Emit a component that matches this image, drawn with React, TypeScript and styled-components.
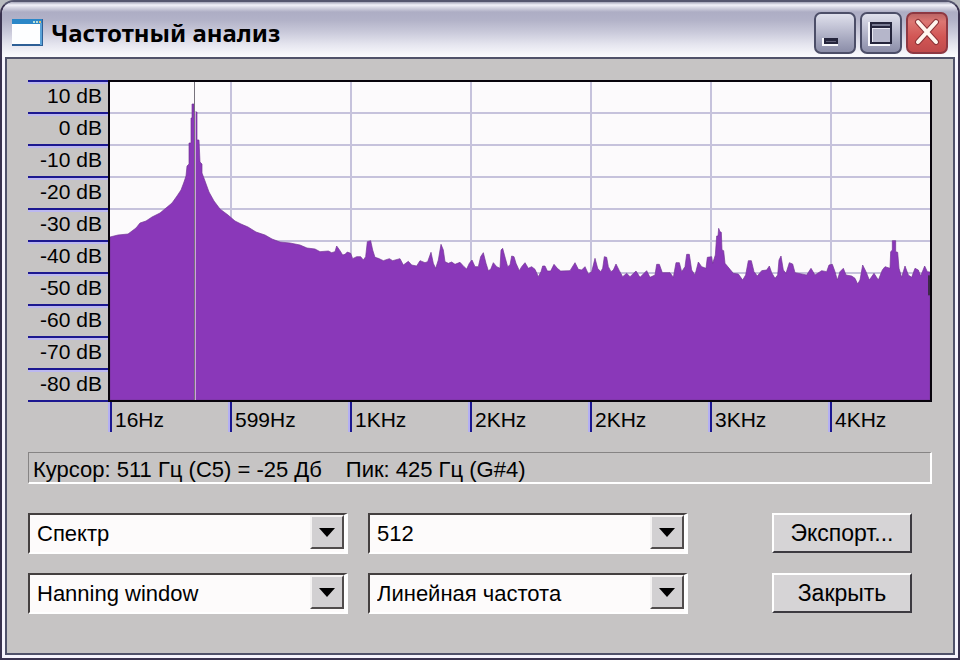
import React from 'react';
import styled, { createGlobalStyle } from 'styled-components';

const GlobalStyle = createGlobalStyle`
  * { box-sizing: border-box; }
  body {
    margin: 0;
    background: #b9bcc0;
    color: #000;
    font-family: "Liberation Sans", Arial, sans-serif;
    font-size: 21px;
    line-height: 24px;
  }
`;

const Window = styled.main`
  display: flex;
  flex-direction: column;
  min-height: 100vh;
  padding: 0 3px 3px;
  border: 2px solid #39324f;
  border-top-color: #55566f;
  border-radius: 14px 14px 0 0;
  background: #f6f4fd;
  overflow: hidden;
`;

const TitleBar = styled.header`
  display: flex;
  align-items: center;
  gap: 8px;
  height: 55px;
  margin: 0 -3px;
  padding: 6px 10px 0 10px;
  background: linear-gradient(
    #a3a4b8 0, #f2f2fa 3px, #d2d2e0 6px, #adadc4 10px, #b2b2c8 18px,
    #c9c9da 30px, #e4e4ee 42px, #f8f8fc 53px, #fafafd 55px
  );
`;

const Title = styled.h1`
  flex: 1;
  margin: 0;
  font-family: "Noto Sans", sans-serif;
  font-size: 24px;
  font-weight: 700;
  line-height: 32px;
`;

const CaptionButtons = styled.div`
  display: flex;
  gap: 4px;
`;

const CaptionButton = styled.button<{ $danger?: boolean }>`
  display: grid;
  place-items: center;
  width: 42px;
  height: 42px;
  padding: 0;
  border: 2px solid ${(p) => (p.$danger ? '#8e3842' : '#4c4e68')};
  border-radius: 7px;
  background: ${(p) =>
    p.$danger
      ? 'linear-gradient(#bb6464 0, #dc7672 20%, #d25654 60%, #c04a4c 100%)'
      : 'linear-gradient(#dfe0ec 0, #c2c3d5 35%, #9fa1b9 75%, #8b8da8 100%)'};
`;

const Panel = styled.section`
  flex: 1;
  padding: 21px 21px 20px;
  border: 2px solid #50526a;
  background: #c6c4c4;
`;

const Chart = styled.div`
  display: grid;
  grid-template-columns: 80px 1fr;
`;

const LevelAxis = styled.ol`
  margin: 0;
  padding: 0;
  list-style: none;
  border-bottom: 2px solid #1c1890;
`;

const Level = styled.li`
  height: 32px;
  padding: 1px 6px 0 0;
  border-top: 2px solid #1c1890;
  box-shadow: inset 0 2px #bcb8f0;
  text-align: right;
  line-height: 26px;
`;

const Plot = styled.div`
  border: 2px solid #08040c;
  background: #fcfafc;
`;

const Spectrum = styled.svg`
  display: block;
  width: 100%;
  height: 318px;
`;

const FrequencyAxis = styled.ol`
  grid-column: 2;
  display: grid;
  grid-template-columns: repeat(6, 120fr) 100fr;
  margin: 0;
  padding: 0 2px;
  list-style: none;
`;

const Frequency = styled.li`
  height: 30px;
  padding: 6px 0 0 3px;
  border-left: 2px solid #1c1890;
  box-shadow: -2px 0 #b4b0f4;
  white-space: nowrap;
`;

const StatusBar = styled.output`
  display: flex;
  gap: 24px;
  height: 32px;
  margin: 20px 0 29px;
  padding: 5px 4px 0;
  border: solid;
  border-width: 1px 2px 2px 1px;
  border-color: #868484 #fff #fff #868484;
  font-size: 22px;
  white-space: pre;
`;

const Controls = styled.form`
  display: grid;
  grid-template-columns: 1fr 1fr 140px;
  column-gap: 20px;
  row-gap: 19px;
  padding-right: 20px;
`;

const ControlPair = styled.div`
  grid-column: span 2;
  display: grid;
  grid-template-columns: 1fr 1fr;
  gap: 20px;
  margin-right: 64px;
`;

const SelectBox = styled.div`
  display: grid;
  grid-template-columns: 1fr 34px;
  height: 41px;
  border: 2px solid;
  border-color: #444040 #fff #fff #444040;
  border-right-width: 4px;
  background: #fdfbfb;
`;

const Select = styled.select`
  grid-area: 1 / 1 / 2 / 3;
  width: 100%;
  padding: 0 40px 0 7px;
  border: 0;
  appearance: none;
  background: transparent;
  color: #000;
  font: 22px/32px "Liberation Sans", Arial, sans-serif;
`;

const DropArrow = styled.span`
  grid-area: 1 / 2;
  display: grid;
  place-items: center;
  height: 34px;
  border: 2px solid;
  border-color: #f4f2f2 #504c4c #504c4c #f4f2f2;
  background: #d2d0d2;
  pointer-events: none;
`;

const PushButton = styled.button`
  height: 40px;
  padding: 0;
  border: 2px solid;
  border-color: #fff #3c3a40 #3c3a40 #fff;
  background: #d6d4d6;
  color: #000;
  font: 23px/32px "Liberation Sans", Arial, sans-serif;
`;

const levels = [10, 0, -10, -20, -30, -40, -50, -60, -70, -80];
const frequencies = ['16Hz', '599Hz', '1KHz', '2KHz', '2KHz', '3KHz', '4KHz'];

type Band = { x: number; y: number; scale: number; points: string };

const bands: Band[] = [
  {
    x: 0, y: 0, scale: 3,
    points:
      '0,155 8,153 18,152 22,149 26,146 30,141 36,139 42,135 50,131 56,126 62,121 67,114 71,108 74,100 76,94 77,84 79,82 79,61 81,61 81,36 82,36 82,22 84,22 84,30 87,30 87,58 89,58 90,80 92,82 92,91 95,99 99,110 104,119 110,127 118,133 125,139 131,142 138,145 146,150 155,153 162,157 170,160 180,161 190,163 197,166 205,167',
  },
  {
    x: 630, y: 354, scale: 1,
    points:
      '0,155 25,153 35,158 45,155 50,138 60,152 68,165 75,163 82,156 92,160 98,176 110,170 122,170 130,180 137,170 142,125 152,122 158,150 165,172 175,175 190,182 208,176 218,182 240,176 250,195 265,184 275,195 290,198 300,182 315,188 323,185 333,157 340,190 347,205 355,180 363,133 370,150 375,185 385,190 395,186 405,193 420,187 432,200 440,207 448,190 456,180 465,200 475,200 482,170 490,158 498,190 505,212 512,208 520,188 530,200 540,205 543,150 548,145 556,175 563,200 570,195 575,168 582,170 588,190 598,212 605,200 615,188 625,205 635,200 645,208 655,230 663,215 668,198 675,198 682,213 692,213 702,193 712,205 722,213 750,212 765,188 775,208 785,210 795,200 805,222 815,215 825,175 833,205 842,215 848,205 853,170 860,172 865,200 873,215 880,210 888,192 898,212 908,230 920,220',
  },
  {
    x: 1560, y: 354, scale: 1,
    points:
      '0,230 18,213 30,232 50,212 60,232 75,225 80,193 88,193 97,218 120,218 130,232 138,188 148,188 155,215 165,200 170,163 178,163 185,210 195,225 205,186 215,200 228,205 232,172 245,170 248,190 256,165 260,108 264,108 266,85 270,95 274,97 276,150 281,152 285,190 300,208 310,220 325,222 338,240 347,225 355,182 364,182 372,215 382,228 395,212 410,210 418,198 425,218 435,235 443,225 447,180 453,168 460,210 468,220 478,188 488,192 495,218 530,225 543,205 555,225 575,212 590,215 597,195 607,193 615,215 622,240 630,215 640,205 648,225 665,228 675,235 683,252 690,240 698,195 708,215 718,240 732,220 745,240 757,210 765,200 780,205 782,155 787,150 787,122 797,122 797,155 803,157 807,205 815,232 825,198 835,225 845,232 855,205 865,210 872,228 884,198 892,215 900,216',
  },
];

const outline = bands
  .flatMap((band) =>
    band.points.split(' ').map((pair) => {
      const [x, y] = pair.split(',').map(Number);
      return `${band.x + x * band.scale},${band.y + y * band.scale}`;
    }),
  )
  .join(' ');

function SpectrumPlot() {
  return (
    <Spectrum viewBox="0 0 2460 954" preserveAspectRatio="none" role="img" aria-label="Спектр">
      <g fill="#c6c2dc">
        {[90, 186, 282, 378, 474, 570].map((y) => (
          <rect key={y} x="0" y={y} width="2460" height="6" />
        ))}
        {[360, 720, 1080, 1440, 1800, 2160].map((x) => (
          <rect key={x} x={x} y="0" width="6" height="954" />
        ))}
      </g>
      <polygon points={`0,954 ${outline} 2460,954`} fill="#8a38b9" stroke="#713493" strokeWidth="2" />
      <rect x="252" y="0" width="3" height="954" fill="#77727c" />
      <rect x="255" y="90" width="3" height="864" fill="#cfa0de" />
      <rect x="2454" y="580" width="6" height="60" fill="#3d2a48" />
    </Spectrum>
  );
}

function AppIcon() {
  return (
    <svg width="31" height="27" viewBox="0 0 31 27" aria-hidden="true">
      <path d="M0 0h31v27H0z" fill="#2d5f96" />
      <path d="M0 0h30v5H0z" fill="#2b87c8" />
      <path d="M0 5h28v20H0z" fill="#fdfeff" />
      <path d="M28 4h2v22h-2z" fill="#5aa3d8" />
      <path d="M21 2h2v2h-2zM24 2h2v2h-2z" fill="#b9e0d8" />
      <path d="M27 2h2v2h-2z" fill="#e0bc72" />
    </svg>
  );
}

function MinimizeIcon() {
  return (
    <svg width="38" height="38" viewBox="0 0 38 38" aria-hidden="true">
      <path d="M6 24h16v8H6z" fill="#f8f8fc" />
      <path d="M8 24h14v6H8z" fill="#25253c" />
      <path d="M10 27h10v1H10z" fill="#606078" />
    </svg>
  );
}

function MaximizeIcon() {
  return (
    <svg width="38" height="38" viewBox="0 0 38 38" aria-hidden="true">
      <path d="M6 8h22v24H6z" fill="#f8f8fc" />
      <path d="M8 8h22v22H8z" fill="#25253c" />
      <path d="M10 10h18v2H10z" fill="#777990" />
      <path d="M10 14h18v14H10z" fill="#b5b6ca" />
      <path d="M10 14h18v1H10zM10 14h1v14h-1z" fill="#e8e8f2" />
    </svg>
  );
}

function CloseIcon() {
  return (
    <svg width="38" height="38" viewBox="0 0 38 38" aria-hidden="true">
      <path d="M10 8L28 28M28 8L10 28" stroke="#8c3438" strokeWidth="6" strokeLinecap="round" />
      <path d="M10 8L28 28M28 8L10 28" stroke="#fff6ee" strokeWidth="4" strokeLinecap="round" />
    </svg>
  );
}

function ComboBox({ label, value }: { label: string; value: string }) {
  return (
    <SelectBox>
      <Select aria-label={label} defaultValue={value}>
        <option>{value}</option>
      </Select>
      <DropArrow>
        <svg width="16" height="9" viewBox="0 0 16 9" aria-hidden="true">
          <path d="M0 0h16L8 9z" fill="#000" />
        </svg>
      </DropArrow>
    </SelectBox>
  );
}

export default function App() {
  return (
    <>
      <GlobalStyle />
      <Window>
        <TitleBar>
          <AppIcon />
          <Title>Частотный анализ</Title>
          <CaptionButtons>
            <CaptionButton aria-label="Свернуть"><MinimizeIcon /></CaptionButton>
            <CaptionButton aria-label="Развернуть"><MaximizeIcon /></CaptionButton>
            <CaptionButton $danger aria-label="Закрыть окно"><CloseIcon /></CaptionButton>
          </CaptionButtons>
        </TitleBar>
        <Panel>
          <Chart>
            <LevelAxis>
              {levels.map((level) => (
                <Level key={level}>{level} dB</Level>
              ))}
            </LevelAxis>
            <Plot><SpectrumPlot /></Plot>
            <FrequencyAxis>
              {frequencies.map((frequency, index) => (
                <Frequency key={index}>{frequency}</Frequency>
              ))}
            </FrequencyAxis>
          </Chart>
          <StatusBar>
            <span>Курсор: 511 Гц (C5) = -25 Дб</span>
            <span>Пик: 425 Гц (G#4)</span>
          </StatusBar>
          <Controls onSubmit={(event) => event.preventDefault()}>
            <ControlPair>
              <ComboBox label="Алгоритм" value="Спектр" />
              <ComboBox label="Размер" value="512" />
            </ControlPair>
            <PushButton type="button">Экспорт...</PushButton>
            <ControlPair>
              <ComboBox label="Функция" value="Hanning window" />
              <ComboBox label="Ось" value="Линейная частота" />
            </ControlPair>
            <PushButton type="button">Закрыть</PushButton>
          </Controls>
        </Panel>
      </Window>
    </>
  );
}
